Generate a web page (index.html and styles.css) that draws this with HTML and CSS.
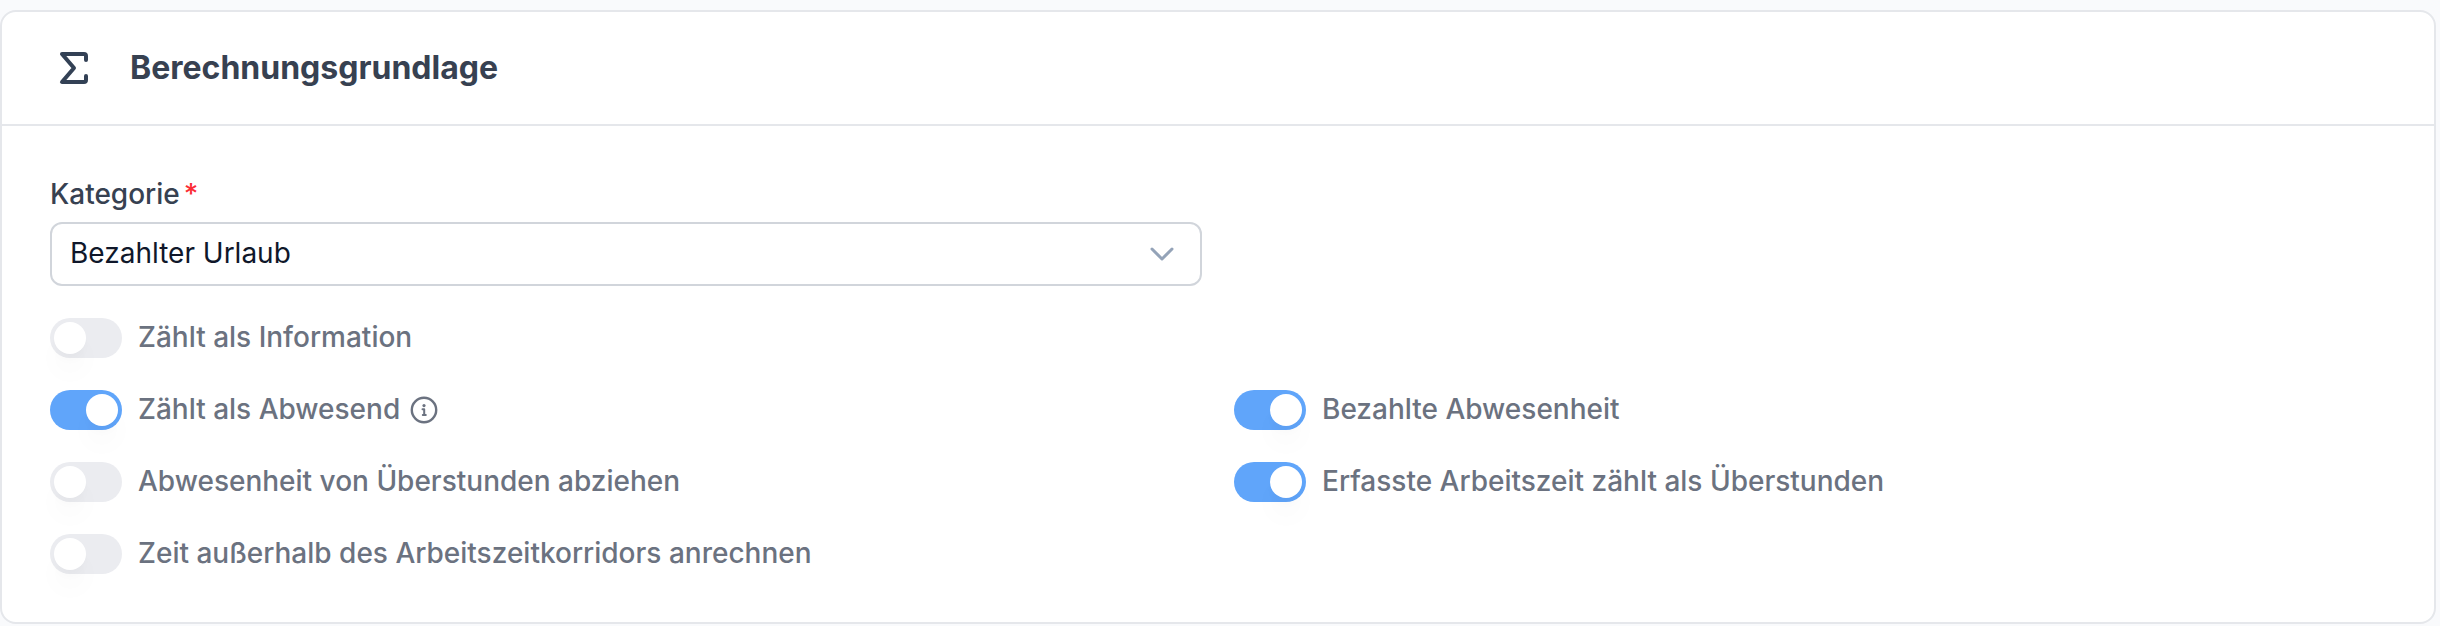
FILE: index.html
```html
<!DOCTYPE html>
<html lang="de">
<head>
<meta charset="utf-8">
<meta name="viewport" content="width=device-width, initial-scale=1">
<title>Berechnungsgrundlage</title>
<link rel="stylesheet" href="styles.css">
</head>
<body>
<section class="card">
  <header class="card-header">
    <svg class="card-icon" viewBox="0 0 48 48" fill="none" stroke="currentColor" stroke-width="4" stroke-linecap="round" stroke-linejoin="round" aria-hidden="true">
      <path d="M36 16V12Q36 10 34 10H12L24 24L12 38H34Q36 38 36 36V32"/>
    </svg>
    <h2 class="card-title">Berechnungsgrundlage</h2>
  </header>
  <form class="card-body">
    <div class="field">
      <label class="field-label" for="category">Kategorie<span class="required">*</span></label>
      <div class="select-wrap">
        <select class="select" id="category" required>
          <option>Bezahlter Urlaub</option>
        </select>
        <svg class="chevron" viewBox="0 0 24 24" fill="none" stroke="currentColor" stroke-width="3" stroke-linecap="round" stroke-linejoin="round" aria-hidden="true">
          <path d="M2 7L12 17L22 7"/>
        </svg>
      </div>
    </div>
    <div class="toggle first">
      <input class="switch" type="checkbox" role="switch" id="info">
      <label class="toggle-label" for="info">Zählt als Information</label>
    </div>
    <div class="toggle first">
      <input class="switch" type="checkbox" role="switch" id="absent" checked>
      <label class="toggle-label" for="absent">Zählt als Abwesend</label>
      <svg class="info-icon" viewBox="0 0 28 28" fill="none" stroke="currentColor" stroke-width="2.400" stroke-linecap="round" stroke-linejoin="round" aria-hidden="true">
        <circle cx="14" cy="14" r="12.200"/>
        <path stroke-width="2" d="M12.500 13.300H14.200V19M12.800 19H15.800"/>
        <circle cx="14" cy="9.600" r="1.600" fill="currentColor" stroke="none"/>
      </svg>
    </div>
    <div class="toggle">
      <input class="switch" type="checkbox" role="switch" id="paid" checked>
      <label class="toggle-label" for="paid">Bezahlte Abwesenheit</label>
    </div>
    <div class="toggle">
      <input class="switch" type="checkbox" role="switch" id="deduct">
      <label class="toggle-label" for="deduct">Abwesenheit von Überstunden abziehen</label>
    </div>
    <div class="toggle">
      <input class="switch" type="checkbox" role="switch" id="overtime" checked>
      <label class="toggle-label" for="overtime">Erfasste Arbeitszeit zählt als Überstunden</label>
    </div>
    <div class="toggle">
      <input class="switch" type="checkbox" role="switch" id="corridor">
      <label class="toggle-label" for="corridor">Zeit außerhalb des Arbeitszeitkorridors anrechnen</label>
    </div>
  </form>
</section>
</body>
</html>
```
FILE: styles.css
```css
* {
  box-sizing: border-box;
}

body {
  margin: 0;
  padding: 10px 4px 2px 0;
  background: #f9fafc;
  font-family: Inter, "Liberation Sans", sans-serif;
  font-size: 28px;
  line-height: 40px;
  color: #374151;
}

.card {
  background: #fff;
  border: 2px solid #e5e7eb;
  border-radius: 16px;
}

.card-header {
  display: flex;
  align-items: center;
  gap: 32px;
  padding: 32px 48px;
  border-bottom: 2px solid #e5e7eb;
}

.card-icon {
  width: 48px;
  height: 48px;
  color: #334155;
}

.card-title {
  margin: 0;
  font-size: 32px;
  font-weight: 700;
  line-height: 48px;
  color: #374151;
}

.card-body {
  display: grid;
  grid-template-columns: repeat(2, minmax(0, 1fr));
  gap: 32px;
  padding: 48px;
}

.field,
.first {
  grid-column: 1;
}

.field-label {
  display: block;
  padding-bottom: 8px;
  font-weight: 500;
}

.required {
  margin-left: 4px;
  color: #fb2c36;
}

.select-wrap {
  position: relative;
}

.select {
  display: block;
  width: 100%;
  height: 64px;
  padding: 0 64px 2px 18px;
  appearance: none;
  border: 2px solid #d1d5db;
  border-radius: 12px;
  background: #fff;
  font: inherit;
  color: #0f172a;
}

.chevron {
  position: absolute;
  top: 20px;
  right: 28px;
  width: 24px;
  height: 24px;
  color: #94a3b8;
  pointer-events: none;
}

.toggle {
  display: flex;
  align-items: center;
  height: 40px;
  font-weight: 500;
  color: #6b7280;
}

.toggle-label {
  padding-bottom: 2px;
}

.switch {
  flex: none;
  width: 72px;
  height: 40px;
  margin: 0 16px 0 0;
  padding: 4px;
  appearance: none;
  border-radius: 20px;
  background: #ebecf0;
}

.switch::before {
  content: "";
  display: block;
  width: 32px;
  height: 32px;
  border-radius: 50%;
  background: #fff;
  box-shadow: 0 20px 30px -6px rgb(0 0 0 / 6%), 0 8px 12px -4px rgb(0 0 0 / 3%);
}

.switch:checked {
  background: #60a5fa;
}

.switch:checked::before {
  margin-left: auto;
}

.info-icon {
  width: 28px;
  height: 28px;
  margin-left: 10px;
}
```
